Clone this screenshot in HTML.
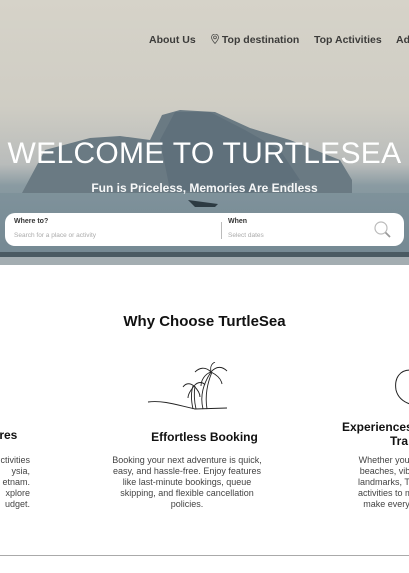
<!DOCTYPE html>
<html><head><style>
*{margin:0;padding:0;box-sizing:border-box}
body{width:409px;height:573px;overflow:hidden;background:#fff;font-family:"Liberation Sans",sans-serif;position:relative}
.hero{position:absolute;left:0;top:0;width:409px;height:265px;background:linear-gradient(#d6d3c9 0%,#cfcdc4 40%,#b9bcbb 62%,#8a9ba2 70%,#7a8d96 85%,#6f838d 95%,#5b6d76 100%);overflow:hidden}
.nav{position:absolute;top:34px;font-size:10.5px;color:#222;white-space:nowrap;font-weight:bold;opacity:.85}
.t{position:absolute;white-space:nowrap}
</style></head><body>
<div class="hero">
<svg width="409" height="265" style="position:absolute;left:0;top:0">
<path d="M22 193 L45 150 L90 138 L120 136 L150 140 L162 115 L180 110 L215 112 L250 128 L290 140 L320 152 L340 160 L352 180 L352 193 Z" fill="#6a7a83"/>
<path d="M160 140 L175 112 L210 112 L245 130 L280 150 L300 180 L250 193 L170 190 Z" fill="#5f707b"/>
<rect x="0" y="193" width="409" height="72" fill="#7a8d97" opacity=".6"/>
<rect x="0" y="252" width="409" height="5" fill="#4a5a62"/>
<rect x="0" y="257" width="409" height="8" fill="#a3adb1"/>
<path d="M188 200 L195 207 L215 207 L218 204 Z" fill="#2c3a42"/>
</svg>
<div class="nav" style="left:149px">About Us</div>
<div class="nav" style="left:211px"><svg width="8" height="10" viewBox="0 0 8 10" style="vertical-align:-1px"><path d="M4 9.5 C1 6 0.5 4.5 0.5 3.5 A3.5 3.5 0 0 1 7.5 3.5 C7.5 4.5 7 6 4 9.5Z M4 2 A1.4 1.4 0 1 0 4 4.8 A1.4 1.4 0 1 0 4 2Z" fill="none" stroke="#333" stroke-width=".8"/></svg> Top destination</div>
<div class="nav" style="left:314px">Top Activities</div>
<div class="nav" style="left:396px">Ad</div>
<div class="t" style="left:0;width:409px;text-align:center;top:137px;font-size:30px;color:#fff;letter-spacing:.3px">WELCOME TO TURTLESEA</div>
<div class="t" style="left:0;width:409px;text-align:center;top:181px;font-size:12px;color:#fff;font-weight:bold;opacity:.95">Fun is Priceless, Memories Are Endless</div>
<div style="position:absolute;left:5px;top:213px;width:399px;height:33px;background:#fff;border-radius:10px">
<div class="t" style="left:9px;top:5px;font-size:7px;font-weight:bold;color:#333">Where to?</div>
<div class="t" style="left:9px;top:19px;font-size:6.5px;color:#aaa">Search for a place or activity</div>
<div style="position:absolute;left:216px;top:9px;width:1px;height:17px;background:#bbb"></div>
<div class="t" style="left:223px;top:5px;font-size:7px;font-weight:bold;color:#333">When</div>
<div class="t" style="left:223px;top:19px;font-size:6.5px;color:#aaa">Select dates</div>
<svg width="20" height="20" style="position:absolute;left:368px;top:7px"><circle cx="8" cy="8" r="6" fill="none" stroke="#bbb" stroke-width="1.2"/><path d="M12.5 12.5 L17 17" stroke="#999" stroke-width="1.8"/></svg>
</div>
</div>
<div class="t" style="left:0;width:409px;text-align:center;top:313px;font-size:15px;font-weight:bold;color:#111">Why Choose TurtleSea</div>
<svg width="90" height="55" style="position:absolute;left:145px;top:362px" fill="none" stroke="#222" stroke-width=".9">
<path d="M3 40 C20 38 35 44 50 47 L82 46"/>
<path d="M58 47 C55 35 58 22 66 10"/><path d="M62 47 C60 35 62 22 67 10"/>
<path d="M66 10 C60 4 54 6 50 10 M66 10 C72 3 78 5 82 9 M66 10 C70 12 76 16 77 22 M66 10 C60 12 56 18 56 24 M66 10 C65 5 66 2 70 0"/>
<path d="M48 47 C46 38 46 30 48 24"/><path d="M51 47 C49 38 49 30 50 24"/>
<path d="M49 24 C44 20 40 22 38 25 M49 24 C53 19 58 20 60 23 M49 24 C46 28 43 32 43 36 M49 24 C53 28 55 32 55 35"/>
</svg>
<svg width="20" height="40" style="position:absolute;left:392px;top:368px"><path d="M18 2 C8 2 2 10 4 22 C6 30 12 34 18 36" fill="none" stroke="#222" stroke-width="1"/></svg>
<div class="t" style="left:-8px;top:428px;font-size:12px;font-weight:bold;color:#111">ures</div>
<div class="t" style="left:0;width:409px;text-align:center;top:430px;font-size:12px;font-weight:bold;color:#111">Effortless Booking</div>
<div class="t" style="left:342px;top:420px;font-size:12px;font-weight:bold;color:#111">Experiences</div>
<div class="t" style="left:390px;top:434px;font-size:12px;font-weight:bold;color:#111">Tra</div>
<div class="t" style="left:-40px;width:70px;text-align:right;top:455px;font-size:9px;line-height:11px;color:#444">ctivities<br>ysia,<br>etnam.<br>xplore<br>udget.</div>
<div class="t" style="left:94px;width:186px;text-align:center;top:455px;font-size:9px;line-height:11px;color:#444">Booking your next adventure is quick,<br>easy, and hassle-free. Enjoy features<br>like last-minute bookings, queue<br>skipping, and flexible cancellation<br>policies.</div>
<div class="t" style="left:339px;width:100px;text-align:center;top:455px;font-size:9px;line-height:11px;color:#444">Whether you're<br>beaches, vibra<br>landmarks, Turt<br>activities to mat<br>make every t</div>
<div style="position:absolute;left:0;top:555px;width:409px;height:1px;background:#aaa"></div>
</body></html>
